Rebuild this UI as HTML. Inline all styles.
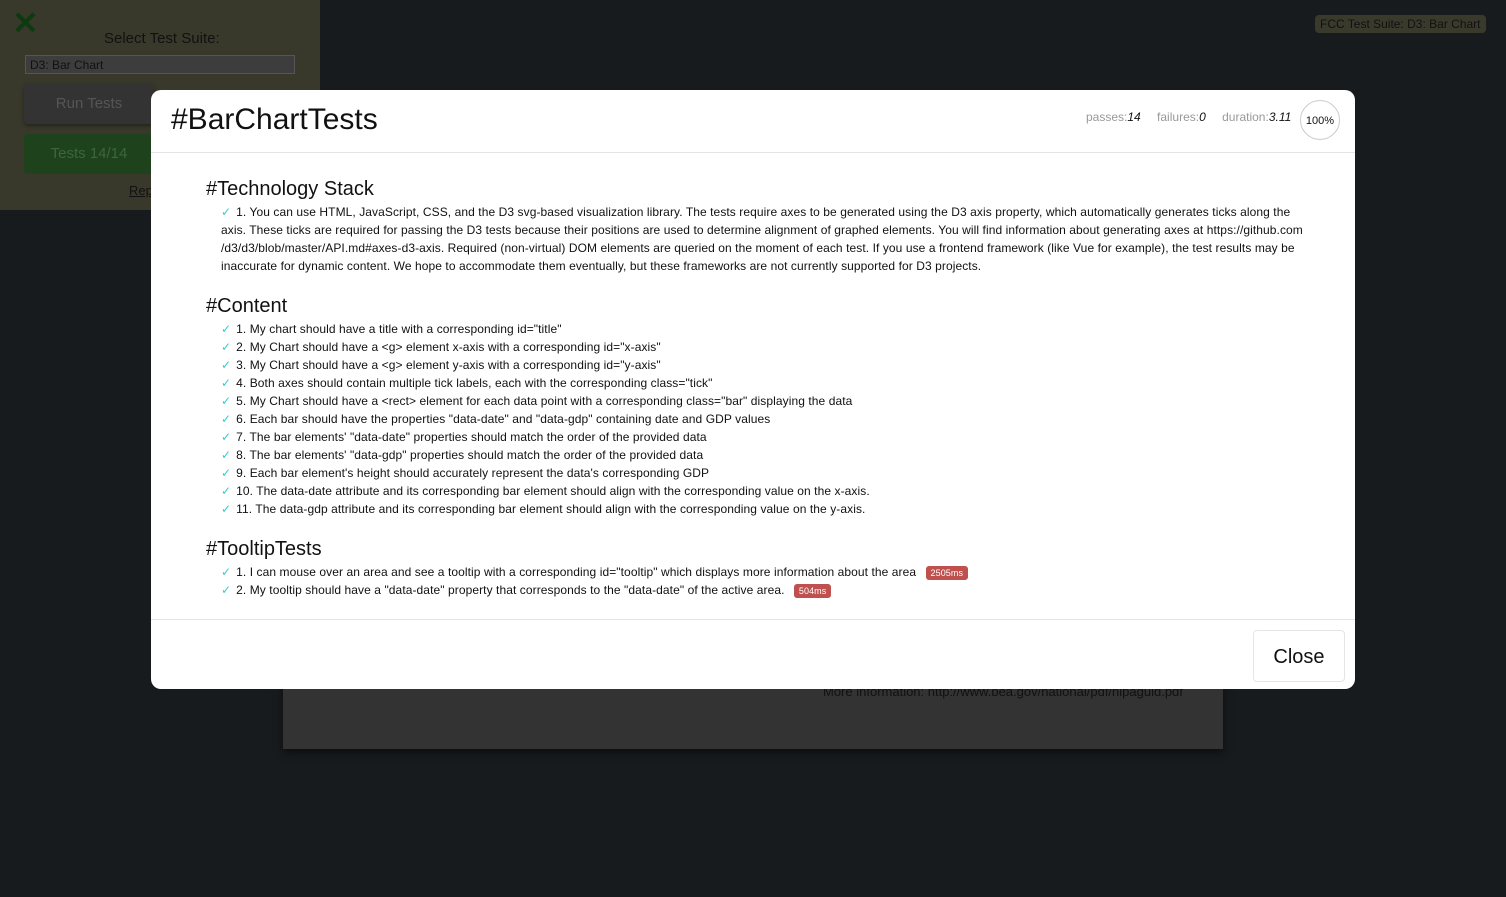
<!DOCTYPE html>
<html><head><style>
*{box-sizing:border-box;margin:0;padding:0}
body{width:1506px;height:897px;background:#181b1e;font-family:"Liberation Sans",sans-serif;position:relative;overflow:hidden}
.left{position:absolute;left:0;top:0;width:320px;height:210px;background:#39392b}
.x{position:absolute;left:12px;top:4px;font-size:32px;color:#0d3a10;font-weight:bold}
.sel{position:absolute;left:104px;top:30px;font-size:15px;color:#111}
.dd{position:absolute;left:25px;top:55px;width:270px;height:19px;background:#3d3d3d;border:1px solid #555;font-size:12px;color:#111;padding:2px 4px}
.b1{position:absolute;left:24px;top:84px;width:130px;height:40px;background:#333;border-radius:4px;box-shadow:0 2px 4px #0006;color:#555;font-size:15px;text-align:center;line-height:40px}
.b2{position:absolute;left:24px;top:134px;width:130px;height:40px;background:#1e421c;border-radius:4px;color:#3d663a;font-size:15px;text-align:center;line-height:40px}
.rep{position:absolute;left:129px;top:183px;font-size:13px;color:#111;text-decoration:underline}
.tag{position:absolute;left:1315px;top:15px;background:#3a3a2c;border-radius:4px;padding:2px 5px;font-size:12px;color:#111}
.gray{position:absolute;left:283px;top:600px;width:940px;height:149px;background:#333;box-shadow:0 4px 8px #0008}
.more{position:absolute;left:823px;top:684px;font-size:13px;color:#111}
.modal{position:absolute;left:151px;top:90px;width:1204px;height:599px;background:#fff;border-radius:10px;overflow:hidden}
.hdr{height:63px;border-bottom:1px solid #e5e5e5;position:relative}
.hdr h1{position:absolute;left:20px;top:13px;font-size:30px;font-weight:normal;color:#111}
.stats{position:absolute;left:935px;top:20px;font-size:12px;color:#999}
.stats i{color:#111;margin-right:13px}
.circ{position:absolute;left:1149px;top:10px;width:40px;height:40px;border:1px solid #ccc;border-radius:50%;font-size:11px;text-align:center;line-height:40px;color:#111}
.body{padding:25px 0 0 55px}
h2{font-size:20px;font-weight:normal;color:#111;margin-bottom:2px}
ul{list-style:none;margin-bottom:20px}
li{font-size:12px;line-height:18px;color:#111;padding-left:15px;padding-right:48px;letter-spacing:0.08px}
li:before{content:"✓";color:#3cc;margin-right:5px}
.ms{display:inline-block;background:#c0504d;color:#fff;font-size:9px;line-height:14px;border-radius:3px;padding:0 5px;margin-left:6px;vertical-align:middle}
.ftr{position:absolute;left:0;top:529px;width:100%;border-top:1px solid #e5e5e5;height:70px}
.close{position:absolute;left:1102px;top:10px;width:92px;height:52px;border:1px solid #e5e5e5;border-radius:4px;font-size:20px;text-align:center;line-height:52px;color:#111}
</style></head><body>
<div class="left"><div class="x">✕</div><div class="sel">Select Test Suite:</div><div class="dd">D3: Bar Chart</div><div class="b1">Run Tests</div><div class="b2">Tests 14/14</div><div class="rep">Report</div></div>
<div class="tag">FCC Test Suite: D3: Bar Chart</div>
<div class="gray"></div><div class="more">More information: http://www.bea.gov/national/pdf/nipaguid.pdf</div>
<div class="modal">
<div class="hdr"><h1>#BarChartTests</h1><div class="stats">passes:<i>14</i> failures:<i>0</i> duration:<i>3.11</i></div><div class="circ">100%</div></div>
<div class="body">
<h2>#Technology Stack</h2>
<ul><li>1. You can use HTML, JavaScript, CSS, and the D3 svg-based visualization library. The tests require axes to be generated using the D3 axis property, which automatically generates ticks along the axis. These ticks are required for passing the D3 tests because their positions are used to determine alignment of graphed elements. You will find information about generating axes at https://github.com /d3/d3/blob/master/API.md#axes-d3-axis. Required (non-virtual) DOM elements are queried on the moment of each test. If you use a frontend framework (like Vue for example), the test results may be inaccurate for dynamic content. We hope to accommodate them eventually, but these frameworks are not currently supported for D3 projects.</li></ul>
<h2>#Content</h2>
<ul>
<li>1. My chart should have a title with a corresponding id="title"</li>
<li>2. My Chart should have a &lt;g&gt; element x-axis with a corresponding id="x-axis"</li>
<li>3. My Chart should have a &lt;g&gt; element y-axis with a corresponding id="y-axis"</li>
<li>4. Both axes should contain multiple tick labels, each with the corresponding class="tick"</li>
<li>5. My Chart should have a &lt;rect&gt; element for each data point with a corresponding class="bar" displaying the data</li>
<li>6. Each bar should have the properties "data-date" and "data-gdp" containing date and GDP values</li>
<li>7. The bar elements' "data-date" properties should match the order of the provided data</li>
<li>8. The bar elements' "data-gdp" properties should match the order of the provided data</li>
<li>9. Each bar element's height should accurately represent the data's corresponding GDP</li>
<li>10. The data-date attribute and its corresponding bar element should align with the corresponding value on the x-axis.</li>
<li>11. The data-gdp attribute and its corresponding bar element should align with the corresponding value on the y-axis.</li>
</ul>
<h2>#TooltipTests</h2>
<ul>
<li>1. I can mouse over an area and see a tooltip with a corresponding id="tooltip" which displays more information about the area <span class="ms">2505ms</span></li>
<li>2. My tooltip should have a "data-date" property that corresponds to the "data-date" of the active area. <span class="ms">504ms</span></li>
</ul>
</div>
<div class="ftr"><div class="close">Close</div></div>
</div>
</body></html>
